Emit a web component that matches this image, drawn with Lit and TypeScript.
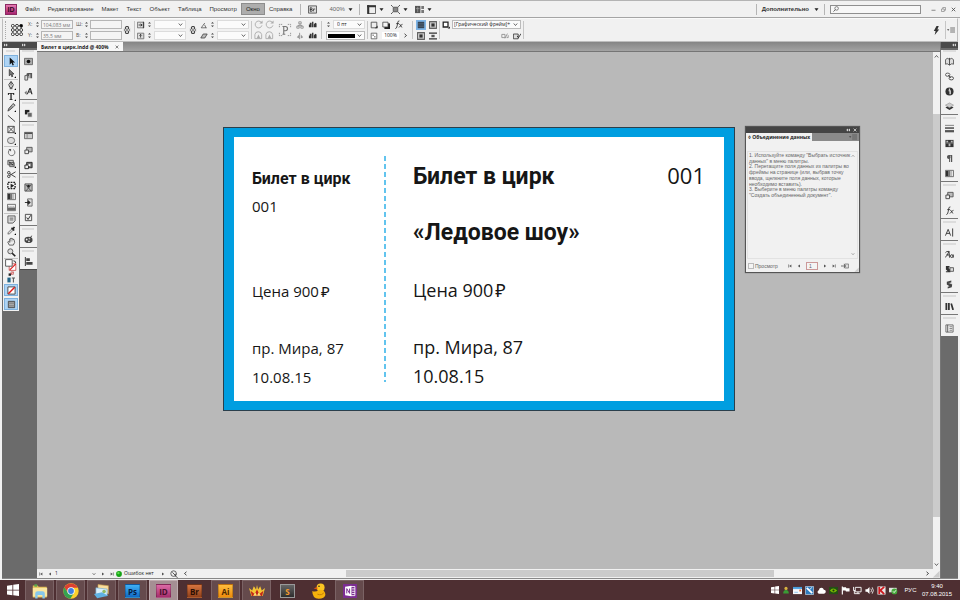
import { LitElement, html, svg, css, nothing } from "lit";
import { customElement } from "lit/decorators.js";
import { classMap } from "lit/directives/class-map.js";

const page = svg`<path d="M1.5 1.5h7v7h-7z" fill="#eee" stroke="#444"/>`;

/* All glyphs share a 10x10 grid. */
const GLYPHS: Record<string, unknown> = {
  arrow: svg`<path d="M3 0.5v8l2-2 1.2 3 1.5-.7-1.3-2.8H9z" fill="#111"/>`,
  direct: svg`<path d="M2.5 .5v7l1.8-1.6 1 2.8 1.2-.5-1-2.6h2.3z" fill="#777" stroke="#222" stroke-width=".7"/><path d="M10 8v2H8z"/>`,
  pen: svg`<path d="M4.5.5L7 4 6 7H3L2 4z" fill="#eee" stroke="#333"/><path d="M4.5 1v4M3 8.5h3" stroke="#333"/><path d="M10 8v2H8z"/>`,
  type: svg`<path d="M1 1h7v2.3h-.8L6.6 2H5.2v6h1v.9H2.8V8h1V2H2.4l-.6 1.3H1z" fill="#222"/><path d="M10 8v2H8z"/>`,
  pencil: svg`<path d="M1 9l1-3 5-5.500 2 2-5.500 5z" fill="#999" stroke="#333" stroke-width=".8"/><path d="M6 2l2 2" stroke="#eee"/><path d="M10 8v2H8z"/>`,
  line: svg`<path d="M1 1.500l8 7" stroke="#333"/>`,
  frameX: svg`<path d="M1 1.500h7v7H1zM1 1.500l7 7M8 1.500l-7 7" fill="none" stroke="#444"/><path d="M10 8v2H8z"/>`,
  ellipse: svg`<ellipse cx="4.500" cy="5" rx="4" ry="3.500" fill="#ddd" stroke="#666"/><path d="M10 8v2H8z"/>`,
  rotate: svg`<path d="M3 2a3.600 3.600 0 1 0 4-.2" fill="none" stroke="#666"/><path d="M1.500 1h3v3z" fill="#555"/>`,
  scale: svg`<path d="M1 1.500h6v5H1zM3 4h5v4.500H3z" fill="#ccc" stroke="#555"/><path d="M2 3l5 4" stroke="#222"/><path d="M10 8v2H8z"/>`,
  scissors: svg`<path d="M9.500 2L3 6M9.500 8L3 4" stroke="#333"/><circle cx="2" cy="3" r="1.400" fill="none" stroke="#333"/><circle cx="2" cy="7" r="1.400" fill="none" stroke="#333"/>`,
  transform: svg`<path d="M1 1.500h8v7H1z" fill="none" stroke="#222" stroke-width="1.500" stroke-dasharray="2 1"/><path d="M4 3v5l4-3z" fill="#222"/>`,
  gradient: svg`<path d="M1 2h3v6H1z" fill="#333"/><path d="M4 2h2v6H4z" fill="#777"/><path d="M6 2h2v6H6z" fill="#bbb"/><path d="M.5 1.500h9v7h-9z" fill="none" stroke="#666"/>`,
  feather: svg`<path d="M.5 1.500h9v7h-9z" fill="#eee" stroke="#666"/><path d="M1 5h8v3H1z" fill="#666"/><path d="M1 4h8" stroke="#999" stroke-dasharray="1 1"/>`,
  note: svg`<path d="M1 1h8v5.500L6.500 9H1z" fill="#ddd" stroke="#555"/><path d="M3 3.500h4M3 5.500h4" stroke="#444" stroke-width=".8"/>`,
  dropper: svg`<path d="M1 9l.5-2L5 3.500 6.500 5 3 8.500z" fill="#ddd" stroke="#444" stroke-width=".7"/><path d="M5 2l3 3M6.300 3.700l2-2.500" stroke="#222" stroke-width="1.800"/><path d="M10 8v2H8z"/>`,
  hand: svg`<path d="M2.500 9L.8 5.500l1-.7L3 6V2.200h1V1.500h1.300V2h1.200v.7h1.300L8.500 6 7 9z" fill="#eee" stroke="#333" stroke-width=".8"/><path d="M4 2.500v2.500M5.500 2.500V5" stroke="#555" stroke-width=".5"/>`,
  zoom: svg`<circle cx="3.700" cy="3.700" r="2.800" fill="#ddd" stroke="#555"/><path d="M5.800 5.800l3.400 3.400" stroke="#222" stroke-width="1.800"/>`,
  navigator: svg`<path d="M.5 1.500h9v7h-9z" fill="#aaa" stroke="#666"/><circle cx="5" cy="5" r="2" fill="#111"/>`,
  paraStyle: svg`<path d="M4 1h5v6H7V2.500H6V7H5V4.500a1.500 1.500 0 0 1-1-3.500z" fill="#555"/><path d="M1 4h3v5H1z" fill="#ddd" stroke="#555"/>`,
  charStyle: svg`<path d="M3 8L6 1h1.500l2 7H8l-.4-1.800H5L4.300 8zM5.500 5h1.800l-.5-2z" fill="#333"/><path d="M.5 6.500L3 4v5z" fill="#777"/>`,
  pathfinder: svg`<path d="M1 1h5v5H1z" fill="#222"/><path d="M4 4h5v5H4z" fill="#666" stroke="#eee" stroke-width=".7"/>`,
  tableP: svg`<path d="M.5 1.500h9v7h-9z" fill="#ccc" stroke="#666"/><path d="M1 2.500h8" stroke="#444" stroke-width="1.500"/><path d="M3.500 3v5" stroke="#888"/>`,
  objStyle: svg`<path d="M3 1.500h6v5H3z" fill="#bbb" stroke="#555"/><path d="M1 4.500h4v4H1z" fill="#eee" stroke="#444"/>`,
  objDark: svg`<path d="M3 1.500h6v6H3z" fill="#777" stroke="#222"/><path d="M1 4.500h4v4H1z" fill="#eee" stroke="#222"/><path d="M5 3.500h2v2H5z" fill="#fff"/>`,
  person: svg`<path d="M1 1h8v8H1z" fill="#bbb" stroke="#555"/><circle cx="5" cy="3.500" r="1.600" fill="#222"/><path d="M2 2l6 7M8 2L2 9" stroke="#444" stroke-width=".9"/>`,
  importD: svg`<path d="M4 1h5v8H4z" fill="#ddd" stroke="#666"/><path d="M1 5h5M4.500 3L7 5 4.500 7z" fill="#222" stroke="#222"/>`,
  check: svg`${page}<path d="M3 5l1.500 2.200L7.500 2.500" fill="none" stroke="#222"/>`,
  palette: svg`<ellipse cx="5" cy="5.500" rx="4.500" ry="3.500" fill="#444"/><circle cx="3" cy="5" r="1" fill="#eee"/><circle cx="5.500" cy="7" r="1" fill="#ddd"/><path d="M5 4.500L9 .8" stroke="#333"/><circle cx="6" cy="4" r="1" fill="#bbb"/>`,
  align: svg`<path d="M1.500 0v10" stroke="#222"/><path d="M2.500 1.500h4v3h-4zM2.500 5.500h7v3h-7z" fill="#444"/>`,
  book: svg`<path d="M5 2.500L2.500 1.500.5 3v5l2-.5L5 9l2.500-1.500 2 .5V3l-2-1.500z" fill="#ddd" stroke="#555"/><path d="M5 1v8" stroke="#444"/>`,
  links: svg`<ellipse cx="3" cy="3" rx="2.500" ry="1.800" fill="none" stroke="#555"/><ellipse cx="7" cy="7" rx="2.500" ry="1.800" fill="none" stroke="#444"/><path d="M3.500 3.500l3 3" stroke="#444"/>`,
  info: svg`<circle cx="5" cy="5" r="4.500" fill="#333"/><path d="M4 4.200h1.700V8" fill="none" stroke="#fff" stroke-width="1.300"/><path d="M4.300 1.800h1.400v1.300H4.300z" fill="#fff"/>`,
  layers: svg`<path d="M5 3.500l4.500 2.500L5 9 .5 6z" fill="#333"/><path d="M5 1l4.500 2.500L5 6.500.5 3.500z" fill="#ccc" stroke="#888" stroke-width=".6"/>`,
  stroke: svg`<path d="M0 1.500h10" stroke="#777"/><path d="M0 4.500h10" stroke="#666" stroke-width="2"/><path d="M0 8h10" stroke="#555" stroke-width="2.500"/>`,
  swatches: svg`<path d="M.5 1h9v8h-9z" fill="#333"/><path d="M1.500 2h2v2h-2zM6.500 2h2v2h-2zM4 5h2v3H4z" fill="#bbb"/><path d="M.5 4.500h9" stroke="#888"/>`,
  pilcrow: svg`<path d="M8 1H4.500a2.300 2.300 0 0 0 0 4.600V9h1V2h1v7H8z" fill="#555"/><circle cx="4.500" cy="3.300" r="1.700" fill="#555"/>`,
  fx: svg`<path d="M1.500 9.500Q3 9.500 3.500 6.500L4.300 2.300Q4.700.8 6 1M2.500 4h3M6 4.300l2.800 4M9.500 4.300L5.500 8.300" fill="none" stroke="#333"/>`,
  caret: svg`<path d="M.5 8.500L3.500 1.500l2.800 7M1.500 6h4M8.500.5v9" fill="none" stroke="#333"/>`,
  aa: svg`<path d="M0 8.500Q2 7 4.500 1.500l.5 7M1.500 5.500h3.500M.5 3Q1 1.500 4.500 1.500" fill="none" stroke="#333"/><ellipse cx="7.500" cy="6.800" rx="1.400" ry="1.600" fill="none" stroke="#333"/><path d="M9.200 5v3.500" stroke="#333"/>`,
  grepA: svg`<path d="M1 1h4v2H3.500L6 5v3H1V7h2L1 5z" fill="#333"/><path d="M5.500 3h4v4h-4z" fill="#ddd" stroke="#555"/>`,
  grepB: svg`<path d="M2 2l5-1.500v2L5 3.500 8 5l-.5 3L3 9.500v-2l2-.5-3-2z" fill="#444"/><path d="M4 3.500h4" stroke="#aaa" stroke-width=".6"/>`,
  library: svg`<path d="M.5 1h2v8h-2zM3.300 1h2v8h-2zM6 2l1.800-.7L10 8.500 8 9z" fill="#333"/>`,
  pages: svg`<path d="M1 1h8v8H1z" fill="#eee" stroke="#666"/><path d="M3 1v8" stroke="#555"/><path d="M5 3h3M5 5h3M5 7h3" stroke="#666" stroke-width=".8"/>`,
  chain: svg`<path d="M3 4V2.500a2 2 0 0 1 4 0V4M3 6v1.500a2 2 0 0 0 4 0V6M5 3v4" fill="none" stroke="#444" stroke-width="1.400"/><path d="M1 4l1.500 1L1 6M9 4L7.500 5 9 6" fill="none" stroke="#666"/>`,
  scaleX: svg`<path d="M.5 1.500h8v7h-8z" fill="#ddd" stroke="#666"/><path d="M2 5h4M4.500 3.500L6.500 5l-2 1.500M8 1v8" fill="none" stroke="#222"/>`,
  scaleY: svg`<path d="M.5 1.500h8v7h-8z" fill="#ddd" stroke="#666"/><path d="M4.500 3v4M3 4.500L4.500 3 6 4.500" fill="none" stroke="#222"/>`,
  angle: svg`<path d="M8.500 8.500h-7l4.500-6M5 4.500a4 4 0 0 1 2 4" fill="none" stroke="#555"/>`,
  shear: svg`<path d="M1 7.500l3-5h5l-3 5z" fill="#bbb" stroke="#444"/>`,
  turn: svg`<path d="M8 2.500A3.800 3.800 0 1 0 8.800 6" fill="none" stroke="#aaa"/><path d="M9.500.5v3.500H6z" fill="#aaa"/>`,
  turnBox: svg`<path d="M1 8.500V4a3.800 3.800 0 0 1 7.500 0v4.500z" fill="none" stroke="#aaa"/><path d="M3 8l2-4 2 4z" fill="#aaa"/>`,
  flipP: svg`<path d="M1 3V1h2M7 1h2v2M1 7v2h2M7 9h2V7" fill="none" stroke="#888" stroke-width=".6" stroke-dasharray="1 .5"/><path d="M3.200 8h2M4.100 8V2.500M3.200 2.500h2.100a1.400 1.400 0 0 1 0 3H4.100" fill="none" stroke="#777" stroke-width=".8"/>`,
  tree: svg`<path d="M3.500 1h3v2.500h-3zM1 6.500h3V9H1zM6 6.500h3V9H6zM5 3.500v2M2.500 6.500v-1h5v1" fill="none" stroke="#888"/>`,
  flipH: svg`<path d="M4.500 1v8" stroke="#888"/><path d="M4 3L1 6.500 4 8zM6 3l3 3.500L6 8z" fill="#999"/>`,
  steps: svg`<path d="M1 8V5h1V3h2v5zM4.500 8V2H6v6zM6.500 8V5l1.500-2 1.500 1v4z" fill="#333"/>`,
  corner: svg`${page}<path d="M6 9l3.500-3.500V9z" fill="#333"/>`,
  shadow: svg`<path d="M3 3h7v7H3z" fill="#222"/><path d="M1 1.500h6.500v6H1z" fill="#f4f4f4" stroke="#444"/>`,
  opacity: svg`<path d="M1.500 1.500h7v7h-7z" fill="#fff" stroke="#555"/><path d="M3 3h2v2H3zM5 5h2v2H5z" fill="#999"/>`,
  wrapNone: svg`<path d="M1 1h8v8H1z" fill="#345" /><path d="M1 3h8M1 5h8M1 7h8" stroke="#678" stroke-width=".6"/>`,
  wrapBox: svg`<path d="M.5.5h9v9h-9z" fill="#ccc" stroke="#333"/><path d="M3 3h4v4H3z" fill="#333"/><path d="M1 2h8M1 8h8" stroke="#777" stroke-width=".6"/>`,
  wrapJump: svg`<path d="M0 1.500h10M0 8.500h10" stroke="#333" stroke-width="1.600"/><path d="M3 3.500h4v3H3z" fill="#555"/>`,
  frameObj: svg`<path d="M1.500 1.500h6v6h-6z" fill="#fff" stroke="#222" stroke-width="1.600"/><path d="M7 9.500h3V7z" fill="#222"/>`,
  clear: svg`<path d="M1 3h4v4H1zM5 8l3-6M7 7h2V4" fill="none" stroke="#888"/>`,
  redefine: svg`<path d="M.5 2.500h6v6h-6z" fill="#ddd" stroke="#333"/><path d="M5 5l2 2 3-5" fill="none" stroke="#222"/>`,
  bolt: svg`<path d="M5 0L2 5.500h2L3 10l5-6H6l1.500-4z" fill="#333"/>`,
  flyout: svg`<path d="M0 4h3L1.500 6z" fill="#444"/><path d="M4 2.500h6M4 5h6M4 7.500h6" stroke="#555"/>`,
  bridge: svg`<path d="M.5 1h9v8h-9z" fill="#ddd" stroke="#555"/><path d="M2.500 3v4h1.300a1 1 0 0 0 0-2H2.500h1a1 1 0 0 0 0-2zM6 7V4.500h2" fill="none" stroke="#333" stroke-width=".9"/>`,
  rulers: svg`<path d="M.5.5h9v9h-9z" fill="#eee" stroke="#555"/><path d="M0 1.500h10M1.500 0v10" stroke="#333" stroke-width="2"/>`,
  screen: svg`<path d="M2.500 2.500h5v5h-5z" fill="#888" stroke="#555"/><path d="M0 0l2 2M10 0L8 2M0 10l2-2M10 10L8 8" fill="none" stroke="#444"/>`,
  arrange: svg`<path d="M0 1h6v8H0z" fill="#555"/><path d="M7 1h3v3.500H7zM7 5.500h3V9H7z" fill="#777"/><path d="M1 4h4M3 2v6" stroke="#aaa" stroke-width=".7"/>`,
  refPoint: svg`<path d="M1.500 1.500h7v7h-7zM5 1.500v7M1.500 5h7" fill="none" stroke="#444" stroke-width=".6"/>${[1.5, 5, 8.5].map((y) => [1.5, 5, 8.5].map((x) => svg`<circle cx=${x} cy=${y} r="1.200" fill=${x > 8 && y < 2 ? "#000" : "#fff"} stroke="#222" stroke-width=".7"/>`))}`,
  down: svg`<path d="M1 2.500h8L5 8z" fill="#222"/>`,
  chevron: svg`<path d="M1.500 3L5 7l3.500-4" fill="none" stroke="#444" stroke-width="1.600"/>`,
  chevUp: svg`<path d="M1.500 7L5 3l3.500 4" fill="none" stroke="#444" stroke-width="1.600"/>`,
  chevL: svg`<path d="M7 1.500L3 5l4 3.500" fill="none" stroke="#222" stroke-width="1.600"/>`,
  chevR: svg`<path d="M3 1.500L7 5 3 8.500" fill="none" stroke="#222" stroke-width="1.600"/>`,
  first: svg`<path d="M1.500 1v8" stroke="#555" stroke-width="1.500"/><path d="M8.500 1v8L3 5z" fill="#555"/>`,
  prev: svg`<path d="M7.500 1v8L2 5z" fill="#555"/>`,
  next: svg`<path d="M2.500 1v8L8 5z" fill="#555"/>`,
  last: svg`<path d="M8.500 1v8" stroke="#555" stroke-width="1.500"/><path d="M1.500 1v8L7 5z" fill="#555"/>`,
  spin: svg`<path d="M5 0l3 3H2zM5 10l3-3H2z" fill="#444"/>`,
  minimise: svg`<path d="M1 6.500h8" stroke="#666" stroke-width="1.500"/>`,
  restore: svg`<path d="M1 4h5.500v5H1zM3.500 4V1H9v5.500H6.500" fill="none" stroke="#777" stroke-width="1.200"/>`,
  close: svg`<path d="M1.500 1.500l7 7M8.500 1.500l-7 7" stroke="#444" stroke-width="1.600"/>`,
  closeLight: svg`<path d="M1.500 1.500l7 7M8.500 1.500l-7 7" stroke="#ddd" stroke-width="2"/>`,
  loupe: svg`<circle cx="6" cy="4" r="3" fill="none" stroke="#444"/><path d="M4 6L.8 9.300" stroke="#444" stroke-width="1.300"/>`,
  collapse: svg`<path d="M5 1.500v7L.5 5zM10 1.500v7L5.500 5z" fill="#ddd"/>`,
  expand: svg`<path d="M0 1.500v7L4.500 5zM5 1.500v7L9.500 5z" fill="#ddd"/>`,
  merge: svg`<path d="M4.500 2.500h5v5h-5z" fill="#ddd" stroke="#777"/><path d="M0 5h5M3.500 3L6 5 3.500 7" fill="none" stroke="#555"/>`,
  grip: svg`<path d="M9.500 1v8.500H1z" fill="#ccc"/>`,
  preflight: svg`<circle cx="4.500" cy="4.500" r="3.500" fill="#eee" stroke="#444"/><path d="M3 3l4 4 .5-2.500M6 7l3.500 2.500" fill="none" stroke="#333"/>`,
  green: svg`<circle cx="5" cy="5" r="4.800" fill="#16a416"/><circle cx="4" cy="3.500" r="2" fill="#5fdc4c"/>`,
  fillStroke: svg`<path d="M3.500 4h5.500v5.500H3.500z" fill="#fff" stroke="#c33" stroke-width=".6"/><path d="M4 9l5-5" stroke="#d22"/><path d="M.5.5H6V6H.5z" fill="#fff" stroke="#444" stroke-width=".7"/><path d="M7 1.500q2 0 2 2" fill="none" stroke="#333" stroke-width=".8"/>`,
  defaults: svg`<path d="M1 4h4v4H1z" fill="#222"/><path d="M5 1.500h4v4H5z" fill="#fff" stroke="#a33"/><path d="M5 5l4-3" stroke="#d22"/>`,
  format: svg`<path d="M.5 2h4v6h-4z" fill="#268"/><path d="M6 2.500h4M8 2.500V8" stroke="#555" stroke-width="1.300"/>`,
  none: svg`<path d="M1 1h8v8H1z" fill="#fff" stroke="#444"/><path d="M1.500 8.500l7-7" stroke="#e01818" stroke-width="1.600"/>`,
  normal: svg`<path d="M1.500 1.500h7v7h-7z" fill="#aaa" stroke="#444"/><path d="M1.500 3.500h7M1.500 6.500h7" stroke="#777"/>`,

  windows: svg`<path d="M0 1.500L4.500.8v4H0zM5.200.7L10 0v4.800H5.200zM0 5.400h4.500v4L0 8.700zM5.200 5.400H10V10l-4.800-.6z" fill="#fff"/>`,
  explorer: svg`<path d="M.5 1.500h3l.7.8h5V9h-8.700z" fill="#e3bd55"/><path d="M1.500.8h1.700v1.500H1.500z" fill="#5aa84c"/><path d="M.5 3h9v5.500h-9z" fill="#fae7a0"/><path d="M2 9.700V6.500q0-1.300 1.500-1.300h3Q8 5.200 8 6.500v3.200H6.500V7.500h-3v2.200z" fill="#86c8ec"/>`,
  chrome: svg`<circle cx="5" cy="5" r="4.800" fill="#fbcf2c"/><path d="M.8 2.700A4.800 4.800 0 0 1 9.300 3H5L3 6z" fill="#dc4032"/><path d="M.8 2.700A4.800 4.800 0 0 0 4.600 9.800L7 6H3z" fill="#35a251"/><circle cx="5" cy="5" r="2.300" fill="#fff"/><circle cx="5" cy="5" r="1.800" fill="#3f7fe0"/>`,
  mail: svg`<path d="M2.500 1l6.500.7v5l-6.500-.7z" fill="#f9dd9e" stroke="#c79b4b" stroke-width=".4"/><path d="M1.200 3l7 .8V8l-7-.5z" fill="#d8eefb" stroke="#6fa9cc" stroke-width=".4"/><path d="M0 6.800l5-1L8.800 8 2 9.500z" fill="#5fb2e4"/><circle cx="6.300" cy="5.300" r="1.100" fill="#8dbb66"/>`,
  crown: svg`<path d="M0 3.200l2 1.500L3 2l1.400 2L5 1.200 5.700 4 7 2l1 2.700 2-1.500-1.400 5H1.500z" fill="#f5c534"/><path d="M1 4.800l2.500 2L5 4l1.500 2.800 2.500-2-.8 3.400H1.800z" fill="#c3271a"/><path d="M2.500 8L4 6l1 2 1-2 1.500 2z" fill="#fae373"/>`,
  duck: svg`<circle cx="6" cy="2.800" r="2.500" fill="#fcc522"/><path d="M.8 5q2 1 4-.7Q9 4 9 7.500 8.500 9.800 4.800 9.800.8 9.800.8 5z" fill="#f6b20c"/><path d="M3.800 2.300L1.700 3.500l2.400.5z" fill="#d95713"/><circle cx="5" cy="2" r=".5" fill="#222"/><path d="M4 7q3 1 4-1" fill="none" stroke="#c47d06" stroke-width=".6"/>`,
  onenote: svg`<path d="M0 0h10v10H0z" fill="#7c2e92"/><path d="M5.500 1.800h3v6.500h-3z" fill="none" stroke="#fff" stroke-width=".6"/><path d="M1.500 2L6 1.200v7.600L1.500 8z" fill="#fff"/><path d="M2.700 6.700V3.300l2 3.400V3.300" fill="none" stroke="#7c2e92" stroke-width=".7"/><path d="M6.500 3.500h2M6.500 5.200h2M6.500 6.800h2" stroke="#fff" stroke-width=".6"/>`,
  user: svg`<circle cx="5" cy="3" r="2" fill="#d8b340"/><path d="M1.500 9.500q0-4.500 3.500-4.500t3.500 4.500z" fill="#3a9c35"/>`,
  card: svg`<path d="M0 1.500h10v7.500H0z" fill="#f5f7fa"/><path d="M0 1.500h10V3H0zM1.500 7h4" fill="#3c9bdf" stroke="#3c9bdf" stroke-width=".6"/><path d="M7 4h2v2H7z" fill="#e66b3a"/>`,
  tool: svg`<path d="M.5.5h9v9h-9z" fill="#2e7cc1" stroke="#cfe2f2" stroke-width=".7"/><path d="M2 2l6 6" stroke="#fff" stroke-width="2"/><path d="M7.500 1.500l-2 2.500" stroke="#fff"/>`,
  cloud: svg`<path d="M2 8.500a2 2 0 0 1 0-3.800Q2.500 2 5 2q2 0 2.600 2.200 2.300.2 2.200 2.300-.2 2-2 2z" fill="#fff"/>`,
  nvidia: svg`<path d="M0 1h10v8H0z" fill="#235014"/><path d="M1 5q3.500-4.500 8 0-4 4.500-8 0z" fill="#78b900"/><circle cx="5" cy="5" r="1.200" fill="#1e3a10"/>`,
  flag: svg`<path d="M1.500.5v9" stroke="#fff" stroke-width="1.300"/><path d="M2 1.500h3.500L6 2.500h3.500V6H5.500L5 5H2z" fill="#fff"/>`,
  network: svg`<path d="M2.500 1.500H9v5H2.500z" fill="none" stroke="#fff"/><path d="M.5 1v4h2M1.500 5v3.500h6M5.500 6.500v2" fill="none" stroke="#fff"/>`,
  sound: svg`<path d="M.5 3.500h2L5 1v8L2.500 6.500h-2z" fill="#fff"/><path d="M6.500 3q1.500 2 0 4M8 1.500q2.600 3.500 0 7" fill="none" stroke="#fff" stroke-width=".9"/>`,
  kaspersky: svg`<path d="M.5.5h9v9h-9z" fill="#e9e5e5"/><path d="M2.500 1v8M3 5.500L8 1M4 5l4 4" stroke="#cf1a20" stroke-width="2"/>`,
  ok: svg`<path d="M0 2h8.500v5H0z" fill="#dfe6df"/><circle cx="6" cy="6" r="3.200" fill="#46aa3b"/><path d="M4.500 6l1.200 1.300L7.800 4.700" fill="none" stroke="#fff"/>`,
};

const icon = (name: string, size = 9) =>
  html`<svg class="i${size}" viewBox="0 0 10 10" aria-hidden="true">${GLYPHS[name]}</svg>`;

const tool = (name: string, label: string, active = false) =>
  html`<button class=${classMap({ tool: true, active })} aria-label=${label}>${icon(name)}</button>`;

const iconBase = css`
  :host { display: block; }
  * { box-sizing: border-box; }
  svg { display: block; flex: none; }
  .i4 { width: 4px; height: 4px; }
  .i5 { width: 5px; height: 5px; }
  .i6 { width: 6px; height: 6px; }
  .i8 { width: 8px; height: 8px; }
  .i9 { width: 9px; height: 9px; }
  .i12 { width: 12px; height: 12px; }
  .i14 { width: 14px; height: 14px; }
  .i16 { width: 16px; height: 16px; }
  button, input, select { font: inherit; color: inherit; margin: 0; padding: 0; border: 0; background: none; border-radius: 0; min-width: 0; }
  button { display: flex; align-items: center; justify-content: center; }
`;

@customElement("menu-bar")
class MenuBar extends LitElement {
  static styles = [iconBase, css`
    .bar { display: flex; align-items: center; height: 18px; padding: 0 4px 0 5px; background: #f1f1f1; border-top: 1px solid #b4b4b4; border-bottom: 1px solid #a5a5a5; color: #333; font-family: "Liberation Sans", Arial, sans-serif; font-size: 6px; line-height: 8px; }
    .logo { width: 12px; height: 11px; margin-right: 4px; background: linear-gradient(#e679b2, #a82570); border: 1px solid #8c2a62; color: #33091f; font-weight: 700; font-size: 7px; line-height: 9px; text-align: center; }
    nav { display: flex; margin-right: 4px; }
    nav button { height: 12px; padding: 0 4px; }
    nav .open { background: #adadad; border: 1px solid #8d8d8d; color: #222; }
    .sep { width: 1px; height: 11px; background: #b5b5b5; }
    .group { display: flex; align-items: center; gap: 12px; padding: 0 7px; }
    .group button { gap: 3px; }
    .views { gap: 7px; }
    .zoom { padding-right: 6px; color: #666; }
    .right { display: flex; align-items: center; margin-left: auto; gap: 5px; }
    .right .mode { gap: 5px; font-weight: 700; }
    .search { display: flex; align-items: center; width: 91px; height: 9px; padding-left: 2px; border: 1px solid #8f8f8f; background: #f7f7f7; }
    .search input { flex: 1; height: 7px; }
    .win { display: flex; gap: 5px; margin-left: 5px; }
  `];
  render() {
    const items = ["Файл", "Редактирование", "Макет", "Текст", "Объект", "Таблица", "Просмотр", "Окно", "Справка"];
    return html`<header class="bar">
      <div class="logo">ID</div>
      <nav>${items.map((t) => html`<button class=${t === "Окно" ? "open" : ""}>${t}</button>`)}</nav>
      <div class="sep"></div>
      <div class="group zoom"><button aria-label="Bridge">${icon("bridge")}</button><button>400% ${icon("down", 5)}</button></div>
      <div class="sep"></div>
      <div class="group views">
        <button aria-label="Параметры просмотра">${icon("rulers")}${icon("down", 5)}</button>
        <button aria-label="Режим экрана">${icon("screen")}${icon("down", 5)}</button>
        <button aria-label="Упорядочить">${icon("arrange")}${icon("down", 5)}</button>
      </div>
      <div class="right">
        <div class="sep"></div>
        <button class="mode">Дополнительно ${icon("down", 5)}</button>
        <div class="sep"></div>
        <label class="search">${icon("loupe", 6)}<input type="search" aria-label="Поиск"></label>
        <div class="win">
          <button aria-label="Свернуть">${icon("minimise", 5)}</button>
          <button aria-label="Восстановить">${icon("restore", 5)}</button>
          <button aria-label="Закрыть">${icon("close", 5)}</button>
        </div>
      </div>
    </header>`;
  }
}

@customElement("control-strip")
class ControlStrip extends LitElement {
  static styles = [iconBase, css`
    .strip { display: flex; align-items: center; height: 24px; margin: 0 2px; padding: 0 2px; background: #f1f1f1; border: 1px solid #bdbdbd; border-top-color: #fafafa; color: #555; font-size: 5px; line-height: 7px; }
    .dots { width: 2px; height: 18px; border-left: 1px dotted #aaa; margin-right: 4px; }
    .ref { margin-right: 5px; }
    .rows { display: grid; grid-template-rows: 9px 9px; row-gap: 2px; align-items: center; }
    .row { display: flex; align-items: center; gap: 4px; }
    .row.tight { gap: 2px; }
    .field { display: flex; align-items: center; gap: 1px; }
    .field .name { width: 6px; }
    .field.wide .name { width: 7px; }
    .field input { width: 32px; height: 9px; padding: 0 1px; border: 1px solid #b5b5b5; color: #777; background: #f4f4f4; }
    .pick { display: grid; align-items: center; }
    .pick select { grid-area: 1 / 1; width: 32px; height: 9px; padding: 0 3px; appearance: none; border: 1px solid #dcdcdc; background: #fbfbfb; color: #222; }
    .pick svg { grid-area: 1 / 1; justify-self: end; margin-right: 3px; pointer-events: none; }
    .pick.style select { width: 69px; padding: 0 1px; border-color: #bbb; }
    .pick.line select { width: 39px; border-color: #bbb; }
    .pick.line i { grid-area: 1 / 1; width: 27px; height: 4px; margin-left: 2px; background: #000; }
    .space { width: 3px; }
    .stack { margin: 0 1px; }
    .stack.far { margin: 0 3px; }
    .flip { margin: 0 4px; }
    .sep { width: 1px; height: 18px; margin: 0 2px; background: #c6c6c6; }
    .sep.far { margin: 0 4px; }
    .pct { width: 17px; background: #fff; text-align: center; color: #222; }
    .on { background: #7db4e6; outline: 1px solid #7db4e6; }
    .end { justify-content: flex-end; }
    .right { display: flex; align-items: center; margin-left: auto; }
    .right .sep { margin-left: 4px; margin-right: 1px; }
  `];
  field(name: string, value: string, wide = false) {
    return html`<label class="field ${wide ? "wide" : ""}"><span class="name">${name}</span>${icon("spin", 5)}<input .value=${value}></label>`;
  }
  combo(glyph: string, label: string) {
    return html`<div class="row tight">${icon(glyph, 8)}${icon("spin", 5)}<div class="pick"><select aria-label=${label}><option></option></select>${icon("chevron", 5)}</div></div>`;
  }
  render() {
    return html`<section class="strip" aria-label="Управление">
      <div class="dots"></div>
      <div class="ref">${icon("refPoint", 12)}</div>
      <div class="rows">${this.field("X:", "104,083 мм")}${this.field("Y:", "35,5 мм")}</div>
      <div class="space"></div>
      <div class="rows">${this.field("Ш:", "", true)}${this.field("В:", "", true)}</div>
      <div class="stack">${icon("chain", 8)}</div>
      <div class="sep"></div>
      <div class="rows">${this.combo("scaleX", "Масштаб по X")}${this.combo("scaleY", "Масштаб по Y")}</div>
      <div class="stack far">${icon("chain", 8)}</div>
      <div class="rows">${this.combo("angle", "Угол поворота")}${this.combo("shear", "Угол сдвига")}</div>
      <div class="sep"></div>
      <div class="rows">
        <div class="row tight">${icon("turn")}${icon("turn")}</div>
        <div class="row tight">${icon("turnBox")}${icon("turnBox")}</div>
      </div>
      <div class="flip">${icon("flipP", 14)}</div>
      <div class="rows">
        <div class="row">${icon("tree", 8)}${icon("steps")}</div>
        <div class="row">${icon("flipH", 8)}${icon("steps")}</div>
      </div>
      <div class="sep far"></div>
      <div class="rows">
        <div class="row tight">${icon("spin", 5)}<div class="pick"><select aria-label="Толщина обводки"><option>0 пт</option></select>${icon("chevron", 5)}</div></div>
        <div class="pick line"><select aria-label="Тип обводки"><option></option></select><i></i>${icon("chevron", 5)}</div>
      </div>
      <div class="sep"></div>
      <div class="rows">
        <div class="row">${icon("corner", 8)}${icon("shadow", 8)}${icon("fx")}</div>
        <div class="row">${icon("opacity", 8)}<span class="pct">100%</span>${icon("chevR", 5)}</div>
      </div>
      <div class="sep far"></div>
      <div class="rows">
        <div class="row"><span class="on">${icon("wrapNone", 8)}</span>${icon("wrapBox", 8)}</div>
        <div class="row">${icon("wrapBox", 8)}${icon("wrapJump", 8)}</div>
      </div>
      <div class="sep"></div>
      <div class="rows">
        <div class="row tight">${icon("frameObj", 8)}<div class="pick style"><select aria-label="Стиль объекта"><option>[Графический фрейм]+</option></select>${icon("chevron", 5)}</div></div>
        <div class="row end">${icon("clear", 8)}${icon("redefine", 8)}</div>
      </div>
      <div class="sep"></div>
      <div class="right">${icon("bolt", 9)}<div class="sep"></div>${icon("flyout", 8)}</div>
    </section>`;
  }
}

@customElement("tool-rail")
class ToolRail extends LitElement {
  static styles = [iconBase, css`
    :host { flex: none; background: #6b6b6b; }
    .head { display: flex; align-items: center; justify-content: space-between; height: 6px; padding: 0 11px 0 2px; background: #4a4a4a; }
    .cols { display: flex; align-items: flex-start; gap: 1px; padding-left: 1px; }
    .tools { width: 16px; padding: 0 1px 1px; background: #f1f1f1; }
    .tools::before, .group::before { content: ""; display: block; height: 2px; margin: 2px 3px 2px 2px; background: #dcdcdc; }
    .tools::before { margin-bottom: 3px; }
    .tool { width: 14px; height: 11px; }
    .active { background: #aed4f5; outline: 1px solid #7fb2de; outline-offset: -1px; }
    .cut { border-bottom: 1px solid #c4c4c4; }
    .cut:first-child .tool, .tall .tool { height: 12px; }
    .tall { display: grid; gap: 2px; padding-top: 1px; }
    .tools .swatch { height: 12px; }
    .tools .small { height: 6px; }
    .panels { width: 17px; border-bottom: 1px solid #4a4a4a; }
    .group { background: #f1f1f1; }
    .group + .group { border-top: 1px solid #777; }
    .group .tool { width: 17px; height: 15px; }
  `];
  render() {
    const sections = [
      [["arrow", "Выделение"], ["direct", "Частичное выделение"]],
      [["pen", "Перо"], ["type", "Текст"], ["pencil", "Карандаш"], ["line", "Линия"], ["frameX", "Фрейм"], ["ellipse", "Эллипс"]],
      [["rotate", "Поворот"], ["scale", "Масштаб"], ["scissors", "Ножницы"], ["transform", "Трансформация"], ["gradient", "Градиент"], ["feather", "Растушевка"]],
      [["note", "Заметка"], ["dropper", "Пипетка"], ["hand", "Рука"], ["zoom", "Лупа"]],
    ];
    const panels = [["navigator", "paraStyle", "charStyle"], ["pathfinder"], ["tableP", "objStyle", "objDark"], ["person", "importD", "check"], ["palette"], ["align"]];
    return html`<div class="head">${icon("expand", 4)}${icon("expand", 4)}</div>
      <div class="cols">
        <div class="tools">
          ${sections.map((s) => html`<div class="cut">${s.map(([g, l]) => tool(g, l, g === "arrow"))}</div>`)}
          <button class="tool swatch" aria-label="Заливка и обводка">${icon("fillStroke", 12)}</button>
          <button class="tool small" aria-label="По умолчанию">${icon("defaults", 6)}</button>
          <button class="tool small" aria-label="Форматирование">${icon("format", 8)}</button>
          <div class="tall">${tool("none", "Нет", true)}${tool("normal", "Обычный режим", true)}</div>
        </div>
        <div class="panels">${panels.map((g) => html`<div class="group">${g.map((p) => tool(p, p))}</div>`)}</div>
      </div>`;
  }
}

@customElement("panel-dock")
class PanelDock extends LitElement {
  static styles = [iconBase, css`
    :host { flex: none; width: 18px; background: #6b6b6b; border-left: 1px solid #777; }
    .head { display: flex; align-items: center; justify-content: flex-end; height: 6px; padding-right: 2px; background: #4a4a4a; }
    .group { background: #f1f1f1; }
    .group::before { content: ""; display: block; height: 2px; margin: 2px; background: #dcdcdc; }
    .group + .group { border-top: 1px solid #777; }
    .tool { width: 17px; height: 15px; }
  `];
  render() {
    const groups = [["book", "links", "info", "layers"], ["stroke", "swatches", "pilcrow", "gradient"], ["objStyle", "fx"], ["caret"], ["aa", "grepA", "grepB"], ["library"], ["pages"]];
    return html`<div class="head">${icon("collapse", 4)}</div>
      ${groups.map((g) => html`<div class="group">${g.map((p) => tool(p, p))}</div>`)}`;
  }
}

@customElement("circus-ticket")
class CircusTicket extends LitElement {
  static styles = css`
    :host { display: block; box-sizing: border-box; border: 1px solid #2a3f4c; }
    .ticket { display: grid; grid-template-columns: 133px 28px 1fr auto; grid-template-rows: 28px 28px 28px 29px 28px 29px 29px 28px; padding: 24px 19px 13px 18px; border: solid #009ee0; border-width: 9px 10px; background: #fff; color: #161616; font-family: "Open Sans", "Noto Sans", sans-serif; }
    p { margin: 0; font-size: 22px; line-height: 28px; white-space: nowrap; }
    .stub { grid-column: 1; }
    .main { grid-column: 3; }
    .stub span { font-size: 15px; line-height: 1; }
    .main span { font-size: 18px; line-height: 1; }
    .title span { font-family: Roboto, "Open Sans", sans-serif; font-weight: 700; }
    .stub.title span { font-size: 16px; }
    .main.title span { font-size: 23px; }
    .rub { margin-left: 2px; }
    .perforation { grid-column: 2; grid-row: 1 / -1; width: 2px; margin: -5px 0 6px -1px; background: repeating-linear-gradient(#62c4ee 0 5px, transparent 5px 8px); }
    .r1 { grid-row: 1; } .r2 { grid-row: 2; } .r3 { grid-row: 3; } .r5 { grid-row: 5; } .r7 { grid-row: 7; } .r8 { grid-row: 8; }
    .number { grid-column: 4; }
  `;
  render() {
    return html`<article class="ticket">
      <p class="stub title r1"><span>Билет в цирк</span></p>
      <p class="stub r2"><span>001</span></p>
      <p class="stub r5"><span>Цена 900</span><span class="rub">₽</span></p>
      <p class="stub r7"><span>пр. Мира, 87</span></p>
      <p class="stub r8"><span>10.08.15</span></p>
      <div class="perforation"></div>
      <p class="main title r1"><span>Билет в цирк</span></p>
      <p class="number r1">001</p>
      <p class="main title r3"><span>«Ледовое шоу»</span></p>
      <p class="main r5"><span>Цена 900</span><span class="rub">₽</span></p>
      <p class="main r7"><span>пр. Мира, 87</span></p>
      <p class="main r8"><span>10.08.15</span></p>
    </article>`;
  }
}

@customElement("merge-panel")
class MergePanel extends LitElement {
  static styles = [iconBase, css`
    :host { border: 1px solid #555; background: #f1f1f1; color: #666; font-family: "Liberation Sans", Arial, sans-serif; font-size: 5px; line-height: 6px; box-shadow: 0 0 1px #666; }
    .head { display: flex; align-items: center; justify-content: flex-end; gap: 3px; height: 6px; padding-right: 2px; background: #444; color: #ddd; }
    .tabs { display: flex; align-items: center; justify-content: space-between; height: 8px; padding-right: 2px; background: #8a8a8a; }
    h2 { margin: 0; width: 66px; padding-left: 2px; background: #f1f1f1; color: #222; font-family: "Open Sans", sans-serif; font-size: 5px; line-height: 8px; font-weight: 700; white-space: nowrap; }
    .body { display: flex; height: 108px; margin: 10px 1px 0; border: 1px solid #e2e2e2; }
    .body ol { flex: 1; min-width: 0; margin: 0; padding: 0 1px; list-style: none; white-space: pre; }
    .body li + li { margin-top: -1px; }
    .rail { display: flex; flex-direction: column; justify-content: space-between; padding: 2px; opacity: .6; }
    .foot { display: flex; align-items: center; gap: 5px; height: 13px; padding-left: 2px; }
    .foot label { display: flex; align-items: center; gap: 1px; margin-right: auto; }
    .foot input { appearance: none; border: 1px solid #bbb; background: #f4f4f4; }
    .box { width: 6px; height: 6px; }
    .foot .page { width: 12px; height: 8px; padding: 0 2px; border-color: #c99; }
    .grip { align-self: flex-end; }
  `];
  render() {
    return html`<div class="head">${icon("collapse", 4)}${icon("closeLight", 4)}</div>
      <div class="tabs"><h2>◊ Объединение данных</h2>${icon("flyout", 8)}</div>
      <div class="body">
        <ol><li>1. Используйте команду "Выбрать источник
данных" в меню палитры.</li><li>2. Перетащите поля данных из палитры во
фреймы на странице (или, выбрав точку
ввода, щелкните поля данных, которые
необходимо вставить).</li><li>3. Выберите в меню палитры команду
"Создать объединенный документ".</li></ol>
        <div class="rail">${icon("chevUp", 4)}${icon("chevron", 4)}</div>
      </div>
      <div class="foot">
        <label><input class="box" type="checkbox" disabled>Просмотр</label>
        ${icon("first", 4)}${icon("prev", 4)}<input class="page" value="1" aria-label="Запись">${icon("next", 4)}${icon("last", 4)}${icon("merge", 8)}<span class="grip">${icon("grip", 5)}</span>
      </div>`;
  }
}

@customElement("task-bar")
class TaskBar extends LitElement {
  static styles = [iconBase, css`
    .bar { display: flex; align-items: stretch; height: 20px; background: #4e2f32; color: #fff; font-size: 6px; line-height: 8px; }
    .start { width: 25px; }
    .apps { display: flex; gap: 2px; }
    .app { width: 29px; border: 1px solid transparent; border-bottom: 0; }
    .open { background: #654a4c; border-color: #7b6365; }
    .current { background: #a58f93; border-color: #bfadb0; }
    .badge { width: 15px; height: 14px; font-family: "Open Sans", sans-serif; font-weight: 700; font-size: 8px; line-height: 13px; text-align: center; border: 1px solid #0003; }
    .ps { background: linear-gradient(#3fb0f5, #1169c4); color: #061f45; }
    .id { background: linear-gradient(#dd6aa6, #a52d6c); color: #48102d; }
    .br { background: linear-gradient(#d8743f, #90401b); color: #2b0f03; }
    .ai { background: linear-gradient(#ffbd3d, #ee8b0d); color: #4d2900; }
    .st { background: linear-gradient(#666, #2d2d2d); color: #f59b2d; border-color: #999; }
    .tray { display: flex; align-items: center; gap: 3px; margin-left: auto; padding-right: 8px; font-family: "Liberation Sans", Arial, sans-serif; }
    .lang { width: 17px; margin-left: 1px; text-align: center; }
    .clock { width: 30px; text-align: center; }
  `];
  render() {
    const apps: [string, string, string, boolean][] = [
      ["explorer", "Проводник", "open", false], ["chrome", "Chrome", "open", false], ["mail", "Почта", "open", false],
      ["ps", "Ps", "open", true], ["id", "ID", "current", true], ["br", "Br", "", true], ["ai", "Ai", "open", true],
      ["crown", "The Bat", "open", false], ["st", "S", "", true], ["duck", "Cyberduck", "", false], ["onenote", "OneNote", "open", false],
    ];
    const tray = ["windows", "user", "card", "tool", "cloud", "nvidia", "flag", "network", "sound", "kaspersky", "ok"];
    return html`<footer class="bar">
      <button class="start" aria-label="Пуск">${icon("windows", 12)}</button>
      <div class="apps">${apps.map(([k, l, state, text]) => html`<button class="app ${state}" aria-label=${text ? nothing : l}>${text ? html`<span class="badge ${k}">${l}</span>` : icon(k, k === "onenote" ? 14 : 16)}</button>`)}</div>
      <div class="tray">${tray.map((t) => icon(t, t === "windows" || t === "user" ? 8 : 9))}<span class="lang">РУС</span><time class="clock">9:40<br>07.08.2015</time></div>
    </footer>`;
  }
}

@customElement("app-root")
class AppRoot extends LitElement {
  static styles = [iconBase, css`
    :host { display: flex; flex-direction: column; min-height: 100vh; background: #f1f1f1; font-family: "Open Sans", "Noto Sans", sans-serif; }
    .work { display: flex; flex: 1; margin: 0 2px 1px; border-bottom: 1px solid #888; }
    .document { display: flex; flex-direction: column; flex: 1; min-width: 0; }
    .tabs { display: flex; height: 10px; background: linear-gradient(#858585, #a3a3a3); border-bottom: 1px solid #757575; }
    .tab { display: flex; align-items: center; gap: 6px; padding: 0 4px; background: #f6f6f6; color: #222; font-size: 5px; line-height: 8px; font-weight: 700; }
    .view { display: flex; flex: 1; }
    .canvas { position: relative; flex: 1; overflow: hidden; background: #b9b9b9; }
    circus-ticket { position: absolute; left: 186px; top: 75px; width: 512px; }
    merge-panel { position: absolute; left: 708px; top: 74px; width: 115px; }
    .vbar { display: flex; flex-direction: column; justify-content: space-between; width: 7px; padding: 2px 1px; background: linear-gradient(#f1f1f1 12%, #cbcbcb 12% 90%, #f1f1f1 90%); }
    .status { display: flex; align-items: center; height: 9px; background: #f1f1f1; color: #222; font-size: 5px; line-height: 7px; }
    .pager { display: flex; align-items: center; gap: 5px; width: 79px; padding: 0 2px; }
    .pager select { height: 8px; appearance: none; }
    .pager .pick { display: grid; flex: 1; align-items: center; margin-left: -2px; }
    .pick > * { grid-area: 1 / 1; }
    .pick svg { justify-self: end; }
    .flight { display: flex; align-items: center; gap: 2px; margin-right: 7px; }
    .check { display: flex; align-items: center; gap: 5px; width: 20px; }
    .hbar { display: flex; flex: 1; align-items: center; justify-content: space-between; height: 7px; padding: 0 2px; background: linear-gradient(90deg, #f1f1f1 22%, #cbcbcb 22% 79%, #f1f1f1 79%); }
  `];
  render() {
    return html`
      <menu-bar></menu-bar>
      <control-strip></control-strip>
      <main class="work">
        <tool-rail></tool-rail>
        <section class="document">
          <div class="tabs"><div class="tab">Билет в цирк.indd @ 400% <button aria-label="Закрыть документ">${icon("close", 4)}</button></div></div>
          <div class="view">
            <div class="canvas"><circus-ticket></circus-ticket><merge-panel></merge-panel></div>
            <div class="vbar">${icon("chevUp", 5)}${icon("chevron", 5)}</div>
          </div>
          <div class="status">
            <div class="pager">${icon("first", 4)}${icon("prev", 4)}<div class="pick"><select aria-label="Страница"><option>1</option></select>${icon("chevron", 4)}</div>${icon("next", 4)}${icon("last", 4)}</div>
            <div class="flight">${icon("green", 6)}<span>Ошибок нет</span></div>
            <div class="check">${icon("next", 4)}${icon("preflight", 8)}</div>
            <div class="hbar">${icon("chevL", 5)}${icon("chevR", 5)}</div>
            ${icon("grip", 8)}
          </div>
        </section>
        <panel-dock></panel-dock>
      </main>
      <task-bar></task-bar>`;
  }
}
